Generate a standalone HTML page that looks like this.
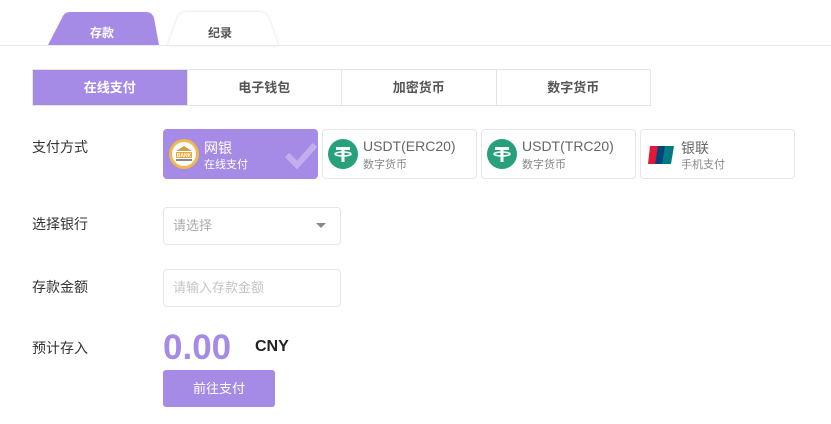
<!DOCTYPE html>
<html><head><meta charset="utf-8"><style>
*{margin:0;padding:0;box-sizing:border-box}
body{width:831px;height:424px;background:#fff;font-family:"Liberation Sans","Noto Sans CJK SC",sans-serif;position:relative;overflow:hidden;color:#333}
.a{position:absolute}
.line{left:0;top:45px;width:831px;height:1px;background:#e8e8e8}
.sub{top:69px;left:32px;width:619px;height:37px;border:1px solid #e4e4e4;display:flex}
.sub div{flex:1;text-align:center;line-height:35px;font-size:13px;font-weight:bold;color:#555;border-right:1px solid #e4e4e4}
.sub div:last-child{border-right:none}
.sub .on{background:#a68be6;color:#fff}
.lab{left:32px;font-size:14px;color:#333}
.card{top:129px;width:155px;height:50px;border:1px solid #e6e6e6;border-radius:4px;background:#fff}
.card .ic{position:absolute;left:5px;top:9px;width:30px;height:30px;border-radius:50%}
.card .t1{position:absolute;left:40px;top:8px;font-size:14px;color:#666}
.card .t2{position:absolute;left:40px;top:26px;font-size:11px;color:#888}
.inp{left:163px;width:178px;height:38px;border:1px solid #e6e6e6;border-radius:4px;font-size:13px;color:#aaa;padding-left:9px;line-height:36px}
</style></head><body>
<svg class="a" style="left:40px;top:8px" width="250" height="40">
<defs><filter id="s"><feDropShadow dx="0" dy="0" stdDeviation="1.5" flood-opacity="0.15"/></filter></defs>
<path d="M8 37 L22 10 Q24 4 30 4 L106 4 Q112 4 114 10 L119 37 Z" fill="#a68be6"/>
<path d="M128 37 L137 12 Q140 4 148 4 L218 4 Q226 4 229 12 L238 37 Z" fill="#fff" filter="url(#s)"/>
</svg>
<div class="a" style="left:90px;top:24px;font-size:12px;color:#fff;font-weight:bold">存款</div>
<div class="a" style="left:208px;top:24px;font-size:12px;color:#555;font-weight:bold">纪录</div>
<div class="a line"></div>
<div class="a sub"><div class="on">在线支付</div><div>电子钱包</div><div>加密货币</div><div>数字货币</div></div>
<div class="a lab" style="top:137px">支付方式</div>
<div class="a lab" style="top:214px">选择银行</div>
<div class="a lab" style="top:277px">存款金额</div>
<div class="a lab" style="top:338px">预计存入</div>

<div class="a card" style="left:163px;background:#a68be6;border-color:#a68be6">
<div class="ic" style="background:#fff;border:3px solid #f0b848"><svg width="24" height="24" viewBox="0 0 24 24"><path d="M4 9 L12 4 L20 9 Z" fill="#c9a24a"/><rect x="4" y="10" width="16" height="6" fill="#e7a93b"/><text x="12" y="15" font-size="5" fill="#fff" text-anchor="middle" font-family="Liberation Sans" font-weight="bold">BANK</text><rect x="4" y="17" width="16" height="2" fill="#888"/></svg></div>
<div class="t1" style="color:#fff">网银</div><div class="t2" style="color:#fff">在线支付</div>
<svg class="a" style="left:120px;top:10px" width="34" height="30"><path d="M3 15 L13 25 L31 5" stroke="#fff" stroke-opacity="0.3" stroke-width="6" fill="none"/></svg>
</div>
<div class="a card" style="left:322px"><div class="ic" style="background:#26a17b"><svg width="30" height="30"><path d="M8 8h14v3h-5.5v12h-3V11H8z" fill="#fff"/><ellipse cx="15" cy="15" rx="8" ry="2" fill="none" stroke="#fff" stroke-width="1.5"/></svg></div><div class="t1">USDT(ERC20)</div><div class="t2">数字货币</div></div>
<div class="a card" style="left:481px"><div class="ic" style="background:#26a17b"><svg width="30" height="30"><path d="M8 8h14v3h-5.5v12h-3V11H8z" fill="#fff"/><ellipse cx="15" cy="15" rx="8" ry="2" fill="none" stroke="#fff" stroke-width="1.5"/></svg></div><div class="t1">USDT(TRC20)</div><div class="t2">数字货币</div></div>
<div class="a card" style="left:640px"><svg class="a" style="left:6px;top:15px" width="28" height="20"><path d="M3 1h9l-3 18H1z" fill="#e21836"/><path d="M11 1h8l-3 18H8z" fill="#00447c"/><path d="M18 1h9l-3 18h-9z" fill="#007b84"/></svg><div class="t1">银联</div><div class="t2">手机支付</div></div>

<div class="a inp" style="top:207px">请选择<svg class="a" style="left:152px;top:15px" width="10" height="6"><path d="M0 0h10L5 5z" fill="#888"/></svg></div>
<div class="a inp" style="top:269px;color:#c4c4c4">请输入存款金额</div>
<div class="a" style="left:163px;top:328px;font-size:35px;font-weight:bold;color:#a68be6">0.00</div>
<div class="a" style="left:255px;top:338px;font-size:16px;font-weight:bold;color:#222">CNY</div>
<div class="a" style="left:163px;top:370px;width:112px;height:37px;background:#a68be6;border-radius:3px;color:#fff;font-size:13px;text-align:center;line-height:37px">前往支付</div>
</body></html>
